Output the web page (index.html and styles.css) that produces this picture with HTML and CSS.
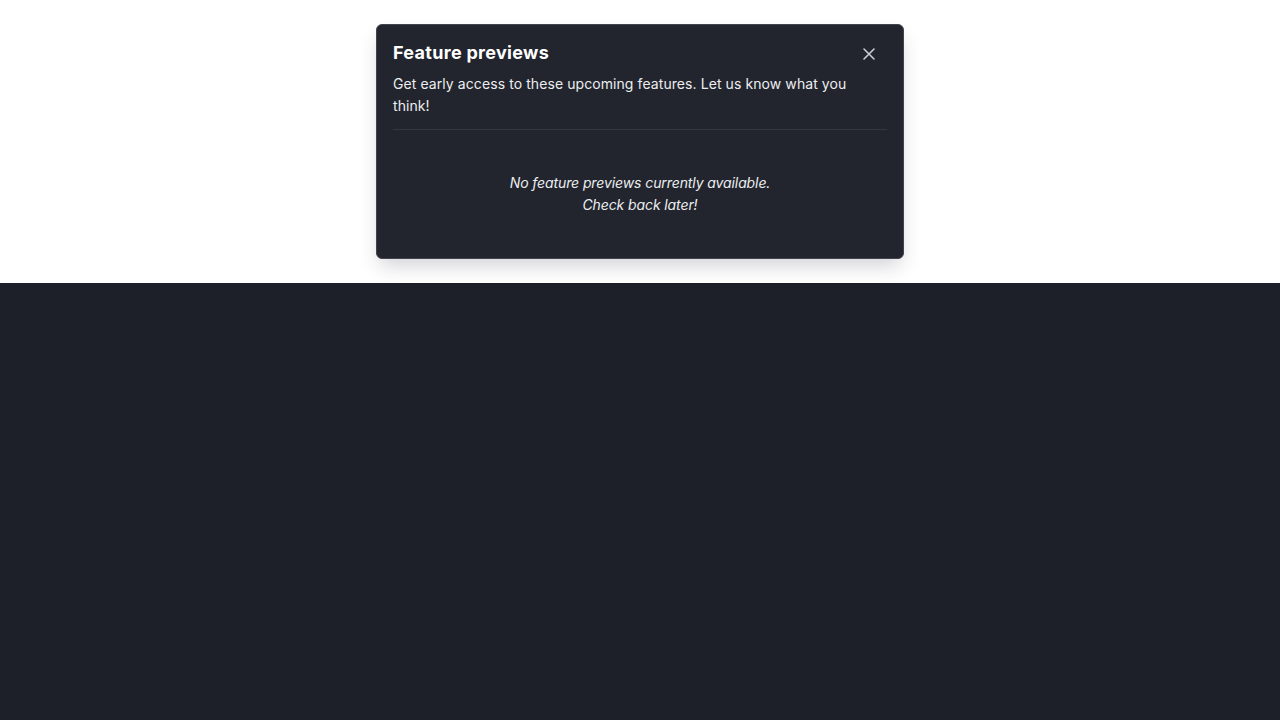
FILE: index.html
```html
<!DOCTYPE html>
<html>
<head>
<meta charset="utf-8">
<link rel="stylesheet" href="styles.css">
</head>
<body>
<div class="top">
  <div class="modal">
    <div class="header">
      <h2 class="title">Feature previews</h2>
      <button class="close" aria-label="Close">
        <svg width="14" height="14" viewBox="0 0 14 14"><path d="M2 2L12 12M12 2L2 12" stroke="#c9ccd3" stroke-width="1.6" stroke-linecap="round"/></svg>
      </button>
    </div>
    <p class="desc">Get early access to these upcoming features. Let us know what you think!</p>
    <div class="divider"></div>
    <div class="empty">
      <p>No feature previews currently available.</p>
      <p>Check back later!</p>
    </div>
  </div>
</div>
<div class="bottom"></div>
</body>
</html>
```
FILE: styles.css
```css
html, body {
  margin: 0;
  padding: 0;
  height: 100%;
  background: #1e2029;
  font-family: Inter, "Noto Sans", sans-serif;
}
.top {
  background: #ffffff;
  padding: 24px 0;
  display: flex;
  justify-content: center;
}
.modal {
  width: 494px;
  background: #22252d;
  border: 1px solid #41444c;
  border-radius: 6px;
  padding: 16px 16px 16px 16px;
  box-shadow: 0 10px 20px -4px rgba(40, 40, 70, 0.22);
}
.header {
  display: flex;
  justify-content: space-between;
  align-items: center;
  height: 24px;
}
.title {
  margin: 0;
  font-size: 18px;
  line-height: 24px;
  font-weight: 700;
  color: #ffffff;
  letter-spacing: 0.3px;
}
.close {
  background: none;
  border: 0;
  padding: 0;
  width: 24px;
  height: 24px;
  margin-right: 6px;
  margin-top: 1px;
  display: flex;
  align-items: center;
  justify-content: center;
  cursor: pointer;
}
.desc {
  margin: 8px 0 0;
  max-width: 470px;
  font-size: 14px;
  line-height: 22px;
  color: #eceef1;
  letter-spacing: 0.08px;
}
.divider {
  height: 1px;
  background: #343741;
  margin-top: 12px;
}
.empty {
  padding: 42px 0 26px;
  text-align: center;
  font-style: italic;
  font-size: 14px;
  line-height: 22px;
  color: #eceef1;
  letter-spacing: -0.1px;
}
.empty p {
  margin: 0;
}
.bottom {
  flex: 1;
}
```
